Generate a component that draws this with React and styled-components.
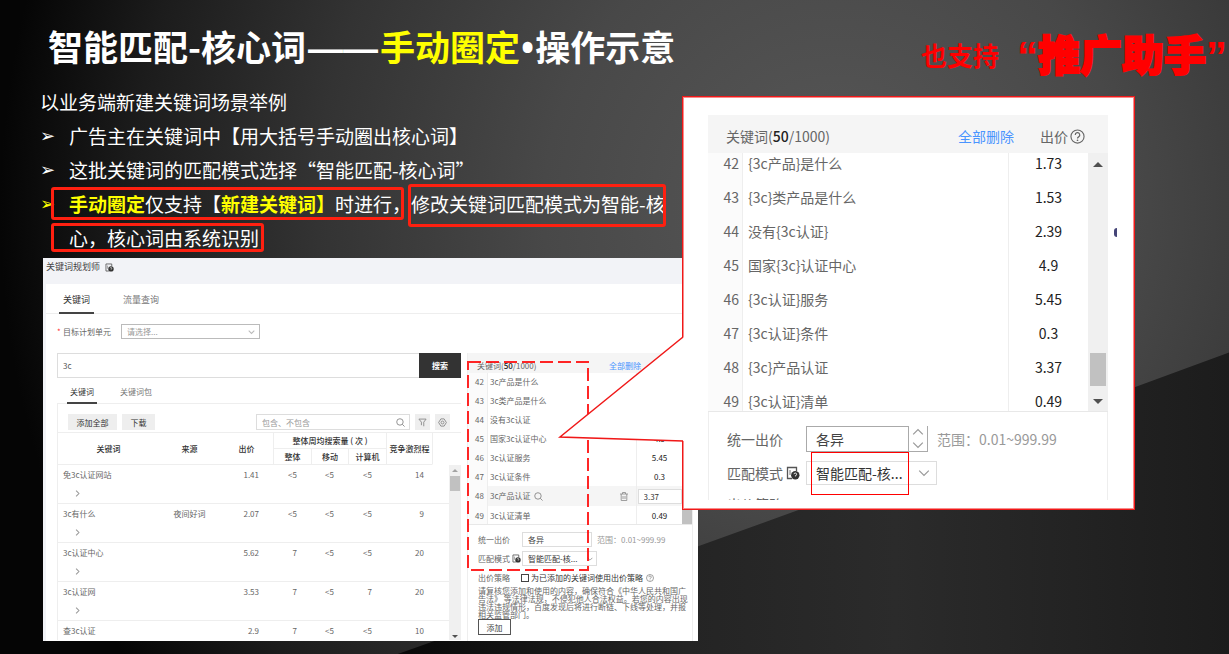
import React from "react";
import styled, { createGlobalStyle, css } from "styled-components";

const Global = createGlobalStyle`
  *, *::before, *::after { box-sizing: border-box; }
  body { margin: 0; background: #000; }
  body, button, input, select { font-family: "Noto Sans CJK SC", sans-serif; }
  ul, h1, p { margin: 0; padding: 0; list-style: none; }
`;

/* ---------- slide ---------- */

const Slide = styled.main`
  position: relative;
  min-height: 100vh;
  overflow: hidden;
  isolation: isolate;
  padding-bottom: 14px;
  background: radial-gradient(ellipse 68% 130% at 68% 32%, #585858 0%, #484848 35%, #333 62%, #1c1c1c 84%, #050505 100%);
`;

const Backdrop = styled.svg`
  position: absolute;
  inset: 0;
  z-index: -1;
  width: 100%;
  height: 100%;
`;

const Header = styled.header`
  display: flex;
  align-items: flex-start;
  justify-content: space-between;
  height: 85px;
  padding: 22px 2px 0 48px;
  white-space: nowrap;
`;

const Title = styled.h1`
  font-size: 35px;
  line-height: 48px;
  font-weight: 700;
  color: #fff;
`;

const TitleAccent = styled.span`
  color: #ff0;
`;

const Dash = styled.span`
  padding: 0 2px;
  font-family: "Liberation Sans", sans-serif;
`;

const Dot = styled.span`
  padding: 0 1px;
  font-family: "Open Sans", sans-serif;
`;

const Note = styled.p`
  display: flex;
  align-items: center;
  gap: 18px;
  margin-top: 11px;
  color: #f00;
  font-size: 26px;
  line-height: 44px;
  font-weight: 700;
`;

const NoteStrong = styled.strong`
  font-size: 42px;
  line-height: 40px;
  font-weight: 900;
  -webkit-text-stroke: 2px #f00;
`;

const Quote = styled.span`
  font-family: "Liberation Sans", sans-serif;
  -webkit-text-stroke: 0;
`;

const Points = styled.ul`
  padding: 0 0 0 40px;
  color: #fff;
  font-size: 19px;
  line-height: 34px;
  white-space: nowrap;
`;

const Point = styled.li`
  display: grid;
  grid-template-columns: ${(p) => (p.$plain ? "1fr" : "29px 1fr")};
`;

const Arrow = styled.span`
  font-family: "DejaVu Sans", sans-serif;
  font-size: 18px;
  color: ${(p) => (p.$accent ? "#ff0" : "#fff")};
`;

const Accent = styled.strong`
  font-weight: 700;
  color: #ff0;
`;

const Ringed = styled.span`
  position: relative;
  &::after {
    content: "";
    position: absolute;
    inset: ${(p) => p.$inset};
    border: 3px solid #ff2010;
    border-radius: 3px;
  }
`;

/* ---------- keyword planner panel ---------- */

const Panel = styled.section`
  width: calc(100% - 574px);
  margin: 3px 0 0 43px;
  padding-left: 3px;
  background: #f2f3f7;
  color: #666;
  font-size: 8px;
  line-height: 12px;
`;

const PanelTitle = styled.div`
  display: flex;
  align-items: center;
  gap: 5px;
  height: 26px;
  padding: 0 0 8px;
  font-size: 9px;
  color: #444;
`;

const PanelBody = styled.div`
  background: #fff;
`;

const Tabs = styled.nav`
  display: flex;
  height: ${(p) => (p.$small ? 26 : 30)}px;
  padding-left: ${(p) => (p.$small ? 10 : 13)}px;
  gap: ${(p) => (p.$small ? 20 : 25)}px;
  border-bottom: 1px solid #eee;
`;

const Tab = styled.button`
  height: ${(p) => (p.$small ? 26 : 30)}px;
  padding: 3px ${(p) => (p.$small ? 3 : 4)}px 0;
  border: 0;
  border-bottom: 2px solid ${(p) => (p.$on ? "#444" : "transparent")};
  background: none;
  font-size: ${(p) => (p.$small ? 8 : 9)}px;
  line-height: 12px;
  color: ${(p) => (p.$on ? "#333" : "#777")};
`;

const TargetRow = styled.div`
  display: flex;
  align-items: center;
  height: 39px;
  padding: 0 0 4px 11px;
`;

const Required = styled.span`
  width: 6px;
  color: #f33;
`;

const Label = styled.label`
  width: ${(p) => p.$w}px;
  display: flex;
  align-items: center;
  gap: ${(p) => p.$gap || 2}px;
  flex: none;
`;

const SelectWrap = styled.span`
  position: relative;
  display: flex;
  flex: none;
  width: ${(p) => p.$w}px;
  height: ${(p) => p.$h}px;
  & > svg {
    position: absolute;
    right: ${(p) => p.$icon}px;
    top: 50%;
    transform: translateY(-50%);
    pointer-events: none;
  }
`;

const Select = styled.select`
  appearance: none;
  width: 100%;
  padding: 0 ${(p) => p.$pad}px;
  border: 1px solid ${(p) => p.$line || "#ddd"};
  border-radius: 0;
  background: #fff;
  color: ${(p) => p.$color || "#333"};
  font-size: inherit;
`;

const Columns = styled.div`
  display: flex;
  align-items: stretch;
  gap: 6px;
  padding: 0 5px 0 11px;
`;

const Left = styled.div`
  flex: 1;
  min-width: 0;
`;

const Search = styled.form`
  display: flex;
  height: 25px;
`;

const SearchInput = styled.input`
  flex: 1;
  min-width: 0;
  padding: 0 5px;
  border: 1px solid #ddd;
  border-right: 0;
  font-size: 8px;
  color: #555;
`;

const SearchButton = styled.button`
  width: 42px;
  padding: 0;
  border: 0;
  background: #333;
  color: #fff;
  font-size: 8px;
  font-weight: 700;
`;

const Box = styled.div`
  border-left: 1px solid #eee;
`;

const Toolbar = styled.div`
  display: flex;
  align-items: center;
  gap: 5px;
  height: 28px;
  padding: 8px 11px 0 10px;
`;

const GrayButton = styled.button`
  display: flex;
  align-items: center;
  justify-content: center;
  width: ${(p) => p.$w}px;
  height: 16px;
  padding: 0;
  border: 0;
  background: #eee;
  color: #333;
  font-size: 8px;
`;

const Filter = styled.label`
  display: flex;
  align-items: center;
  width: 154px;
  height: 16px;
  margin-left: auto;
  padding: 0 4px 0 5px;
  border: 1px solid #ddd;
`;

const FilterInput = styled.input`
  flex: 1;
  min-width: 0;
  padding: 0;
  border: 0;
  outline: 0;
  font-size: 8px;
  &::placeholder { color: #999; }
`;

const TableArea = styled.div`
  display: flex;
  border-top: 1px solid #eee;
`;

const Table = styled.table`
  flex: 1;
  min-width: 0;
  height: 100%;
  table-layout: fixed;
  border-collapse: separate;
  border-spacing: 0;
`;

const Th = styled.th`
  height: ${(p) => (p.$boxed ? 16 : 32)}px;
  padding: 0;
  border-bottom: 1px solid #eee;
  ${(p) => p.$boxed && css`border-left: 1px solid #eee;`}
  color: #333;
  font-weight: 500;
  overflow: hidden;
  white-space: nowrap;
`;

const ThBlank = styled(Th)`
  border-bottom-color: transparent;
`;

const Td = styled.td`
  height: ${(p) => (p.$last ? 19 : 39)}px;
  padding: 4px ${(p) => p.$end || 0}px 0 ${(p) => p.$start || 0}px;
  vertical-align: top;
  text-align: ${(p) => p.$align || "right"};
  white-space: nowrap;
  border-bottom: ${(p) => (p.$last ? 0 : 1)}px solid #eee;
  & > svg { display: block; margin: 9px 0 0 11px; }
`;

const ScrollTrack = styled.div`
  display: flex;
  flex-direction: column;
  align-items: center;
  flex: none;
  width: ${(p) => p.$w}px;
  margin-top: ${(p) => p.$top || 0}px;
  background: #f0f0f0;
`;

const Thumb = styled.i`
  width: 100%;
  height: ${(p) => p.$h}px;
  margin-top: ${(p) => p.$top}px;
  border: solid #f0f0f0;
  border-width: 0 ${(p) => p.$gap}px;
  background: #c1c1c1;
`;

const Caret = styled.i`
  width: 0;
  height: 0;
  border: solid transparent;
  border-width: 0 ${(p) => p.$s}px;
  ${(p) => (p.$down
    ? css`border-top: ${p.$s}px solid #505050; margin-top: auto; margin-bottom: ${p.$m}px;`
    : css`border-bottom: ${p.$s}px solid ${p.$pale ? "#a3a3a3" : "#505050"}; margin-top: ${p.$m}px;`)}
`;

/* ---------- selected keywords ---------- */

const Picked = styled.div`
  position: relative;
  width: 226px;
  flex: none;
  border: solid #eee;
  border-width: 0 1px;
`;

const PickedHead = styled.div`
  display: flex;
  align-items: center;
  height: ${(p) => (p.$big ? 38 : 20)}px;
  padding: ${(p) => (p.$big ? "4px 23px 0 18px" : "6px 51px 0 9px")};
  background: #f5f5f5;
  & b { color: #222; font-weight: 500; }
`;

const ClearLink = styled.a`
  margin-left: auto;
  color: #4a94ff;
  text-decoration: none;
`;

const PriceHead = styled.span`
  display: flex;
  align-items: center;
  gap: 2px;
  margin-left: 26px;
`;

const ListArea = styled.div`
  display: flex;
  height: ${(p) => p.$h}px;
  overflow: hidden;
  border-bottom: 1px solid #e8e8e8;
`;

const List = styled.ul`
  display: flex;
  flex: 1;
  min-width: 0;
  flex-direction: column;
  justify-content: center;
`;

const Row = styled.li`
  display: grid;
  flex: none;
  height: ${(p) => (p.$big ? 34 : p.$hover ? 20 : 19)}px;
  line-height: ${(p) => (p.$big ? 34 : p.$hover ? 20 : 19)}px;
  grid-template-columns: ${(p) => (p.$big ? "35px 1fr 80px" : "20px 1fr 46px")};
  background: ${(p) => (p.$hover ? "#f5f5f5" : "#fff")};
`;

const Index = styled.span`
  padding-right: 3px;
  text-align: right;
  border-right: 1px solid #eee;
  background: #fbfbfb;
`;

const Name = styled.span`
  display: flex;
  align-items: center;
  gap: 3px;
  padding: 0 8px 0 ${(p) => (p.$big ? 5 : 2)}px;
  & > svg:last-child:not(:first-child) { margin-left: auto; }
`;

const Price = styled.span`
  display: flex;
  align-items: center;
  justify-content: center;
  color: #222;
  border-left: 1px solid #eee;
`;

const PriceInput = styled.input`
  width: 44px;
  height: 15px;
  padding: 0 5px;
  border: 1px solid #ddd;
  font-size: 8px;
  color: #333;
`;

const Form = styled.form`
  padding: 5px 0 6px 10px;
  white-space: nowrap;
`;

const FormRow = styled.div`
  display: flex;
  align-items: center;
  height: 19px;
`;

const Amount = styled.input`
  width: ${(p) => p.$w}px;
  height: ${(p) => p.$h}px;
  flex: none;
  padding: 0 ${(p) => p.$pad}px;
  border: 1px solid ${(p) => p.$line || "#ddd"};
  font-size: inherit;
  color: #444;
`;

const Range = styled.span`
  margin-left: ${(p) => p.$gap}px;
  color: #999;
`;

const Check = styled.input`
  appearance: none;
  width: 8px;
  height: 8px;
  margin: 0 2px 0 0;
  border: 1px solid #444;
  background: #fff;
`;

const CheckLabel = styled.label`
  display: flex;
  align-items: center;
  margin-right: 3px;
  color: #333;
`;

const Legal = styled.p`
  width: 212px;
  line-height: 8px;
  white-space: normal;
`;

const AddButton = styled.button`
  display: block;
  width: 33px;
  height: 16px;
  padding: 0;
  border: 1px solid #555;
  background: #fff;
  color: #444;
  font-size: 8px;
`;

const DashFrame = styled.svg`
  position: absolute;
  left: -1px;
  top: 8px;
  width: 122px;
  height: 211px;
  pointer-events: none;
`;

/* ---------- enlarged call-out ---------- */

const Callout = styled.aside`
  position: absolute;
  top: 96px;
  right: 94px;
  width: 453px;
  padding: 18px 26px 9px 25px;
  border: 1px solid #f01818;
  outline: 1px solid #f0181880;
  outline-offset: -2px;
  background: #fff;
  color: #666;
  font-size: 14px;
  line-height: 20px;
`;

const Tail = styled.svg`
  position: absolute;
  left: -126px;
  top: 238px;
  width: 128px;
  height: 110px;
`;

const Details = styled.div`
  height: 88px;
  overflow: hidden;
  border: solid #eee;
  border-width: 0 1px;
  padding: 10px 0 0 18px;
  white-space: nowrap;
`;

const DetailRow = styled.div`
  display: flex;
  align-items: center;
  height: ${(p) => (p.$tight ? 28 : 34)}px;
`;

const Spinner = styled.span`
  display: flex;
  flex-direction: column;
  align-items: center;
  justify-content: space-around;
  width: 19px;
  height: 26px;
  border: solid #aaa;
  border-width: 0 1px 1px 0;
`;

const Marked = styled.span`
  position: absolute;
  inset: -9px 28px -10px 5px;
  border: 1px solid #f00;
  pointer-events: none;
`;

const Speck = styled.i`
  position: absolute;
  right: 17px;
  top: 131px;
  width: 3px;
  height: 9px;
  border-radius: 3px 0 0 3px;
  background: #447;
`;

/* ---------- icons ---------- */

const stroke = { fill: "none", stroke: "#888" };

const Chevron = ({ w = 6, dir = "down", color = "#999" }) => {
  const d = { down: "M1 3l4 4 4-4", up: "M1 7l4-4 4 4", right: "M3 1l4 4-4 4" }[dir];
  return (
    <svg width={w} height={w} viewBox="0 0 10 10">
      <path d={d} {...stroke} stroke={color} strokeWidth={w > 8 ? 1 : 1.5} />
    </svg>
  );
};

const Help = ({ s }) => (
  <svg width={s} height={s} viewBox="0 0 16 16">
    <circle cx="8" cy="8" r="7" {...stroke} stroke="#666" strokeWidth="1.2" />
    <path d="M5.6 6.4a2.4 2.4 0 1 1 3.6 2c-.8.5-1.2.8-1.2 1.7" {...stroke} stroke="#666" strokeWidth="1.3" />
    <circle cx="8" cy="12" r="0.9" fill="#666" />
  </svg>
);

const DocHelp = ({ s }) => (
  <svg width={s} height={s} viewBox="0 0 14 14">
    <path d="M6 12.5H1.5v-11h9V5" {...stroke} stroke="#555" strokeWidth="1.3" />
    <path d="M4 4v5" {...stroke} stroke="#777" />
    <circle cx="9.3" cy="9.2" r="4.2" fill="#333" />
    <path d="M8 8.2a1.3 1.3 0 1 1 1.4 1.4v.8" {...stroke} stroke="#fff" strokeWidth="0.9" />
  </svg>
);

const Magnifier = ({ s = 9 }) => (
  <svg width={s} height={s} viewBox="0 0 10 10">
    <circle cx="4.4" cy="4.4" r="3.6" {...stroke} />
    <path d="M7 7l2.5 2.5" {...stroke} />
  </svg>
);

const Funnel = () => (
  <svg width="9" height="9" viewBox="0 0 10 10">
    <path d="M1 1.2h8L6.4 4.6v4.6M3.8 8V4.6L1 1.2" {...stroke} />
  </svg>
);

const Gear = () => (
  <svg width="9" height="9" viewBox="0 0 10 10">
    <path d="M3.2 1h3.6L9.3 5 6.8 9H3.2L.7 5z" {...stroke} />
    <circle cx="5" cy="5" r="1.6" {...stroke} />
  </svg>
);

const Trash = () => (
  <svg width="8" height="9" viewBox="0 0 8 9">
    <path d="M0 2h8M2.5 2V.5h3V2M1.2 2v6.5h5.6V2M3 4v3M5 4v3" {...stroke} strokeWidth="0.8" />
  </svg>
);

/* ---------- data ---------- */

const results = [
  ["免3c认证网站", "", "1.41", "<5", "<5", "<5", "14"],
  ["3c有什么", "夜间好词", "2.07", "<5", "<5", "<5", "9"],
  ["3c认证中心", "", "5.62", "7", "<5", "<5", "20"],
  ["3c认证网", "", "3.53", "7", "<5", "7", "20"],
  ["查3c认证", "", "2.9", "7", "<5", "<5", "10"],
];

const picked = [
  ["42", "3c产品是什么", "{3c产品}是什么", "1.73"],
  ["43", "3c类产品是什么", "{3c}类产品是什么", "1.53"],
  ["44", "没有3c认证", "没有{3c认证}", "2.39"],
  ["45", "国家3c认证中心", "国家{3c}认证中心", "4.9"],
  ["46", "3c认证服务", "{3c认证}服务", "5.45"],
  ["47", "3c认证条件", "{3c认证}条件", "0.3"],
  ["48", "3c产品认证", "{3c}产品认证", "3.37"],
  ["49", "3c认证清单", "{3c认证}清单", "0.49"],
];

const columnWidths = [101, 61, 53, 38, 37, 38, 46, null];

function ResultTable() {
  return (
    <TableArea>
      <Table>
        <colgroup>
          {columnWidths.map((w, i) => (
            <col key={i} width={w || undefined} />
          ))}
        </colgroup>
        <thead>
          <tr>
            <Th rowSpan={2}>关键词</Th>
            <Th rowSpan={2}>来源</Th>
            <Th rowSpan={2}>出价</Th>
            <Th colSpan={3} $boxed>整体周均搜索量 ( 次 )</Th>
            <Th rowSpan={2} $boxed>竞争激烈程</Th>
            <ThBlank rowSpan={2} $boxed />
          </tr>
          <tr>
            <Th $boxed>整体</Th>
            <Th $boxed>移动</Th>
            <Th $boxed>计算机</Th>
          </tr>
        </thead>
        <tbody>
          {results.map((r, i) => {
            const last = i === results.length - 1;
            return (
              <tr key={r[0]}>
                <Td $align="left" $start={5} $last={last}>
                  {r[0]}
                  {!last && <Chevron dir="right" w={7} />}
                </Td>
                <Td $align="center" $last={last}>{r[1]}</Td>
                {r.slice(2, 6).map((v, n) => (
                  <Td key={n} $end={14} $last={last}>{v}</Td>
                ))}
                <Td $end={8} $last={last}>{r[6]}</Td>
                <Td $last={last} />
              </tr>
            );
          })}
        </tbody>
      </Table>
      <ScrollTrack $w={12} $top={32}>
        <Caret $s={3} $m={4} $pale />
        <Thumb $h={15} $top={4} $gap={1} />
        <Caret $s={3} $m={2} $down />
      </ScrollTrack>
    </TableArea>
  );
}

function PickedPanel() {
  return (
    <Picked>
      <PickedHead>
        <span>关键词(<b>50</b>/1000)</span>
        <ClearLink href="#clear">全部删除</ClearLink>
      </PickedHead>
      <ListArea $h={152}>
        <List>
          {picked.map(([no, word, , price]) => {
            const active = no === "48";
            return (
              <Row key={no} $hover={active}>
                <Index>{no}</Index>
                <Name>
                  <span>{word}</span>
                  {active && <Magnifier />}
                  {active && <Trash />}
                </Name>
                <Price>
                  {active ? <PriceInput defaultValue={price} aria-label="出价" /> : price}
                </Price>
              </Row>
            );
          })}
        </List>
        <ScrollTrack $w={10}>
          <Thumb $h={33} $top={118} $gap={0} />
        </ScrollTrack>
      </ListArea>
      <Form onSubmit={(e) => e.preventDefault()}>
        <FormRow>
          <Label htmlFor="bid" $w={44}>统一出价</Label>
          <Amount id="bid" defaultValue="各异" $w={70} $h={15} $pad={5} />
          <Range $gap={5}>范围：0.01~999.99</Range>
        </FormRow>
        <FormRow>
          <Label htmlFor="mode" $w={44}>匹配模式<DocHelp s={9} /></Label>
          <SelectWrap $w={75} $h={15} $icon={4}>
            <Select id="mode" $pad={5}><option>智能匹配-核...</option></Select>
            <Chevron />
          </SelectWrap>
        </FormRow>
        <FormRow>
          <Label as="span" $w={43}>出价策略</Label>
          <CheckLabel><Check type="checkbox" />为已添加的关键词使用出价策略</CheckLabel>
          <Help s={8} />
        </FormRow>
        <Legal>
          请复核您添加和使用的内容，确保符合《中华人民共和国广告法》 等法律法规，不侵犯他人合法权益。若您的内容出现违法违规情形，百度发现后将进行断链、下线等处理，并报相关监管部门。
        </Legal>
        <AddButton>添加</AddButton>
      </Form>
      <DashFrame>
        <rect x="1" y="1" width="120" height="208" fill="none" stroke="#f00" strokeOpacity="0.85" strokeWidth="2" strokeDasharray="13 5" />
      </DashFrame>
    </Picked>
  );
}

function PlannerPanel() {
  return (
    <Panel>
      <PanelTitle>关键词规划师 <DocHelp s={9} /></PanelTitle>
      <PanelBody>
        <Tabs>
          <Tab $on>关键词</Tab>
          <Tab>流量查询</Tab>
        </Tabs>
        <TargetRow>
          <Required>*</Required>
          <Label htmlFor="unit" $w={58}>目标计划单元</Label>
          <SelectWrap $w={139} $h={15} $icon={5}>
            <Select id="unit" $pad={5} $line="#bbb" $color="#999"><option>请选择...</option></Select>
            <Chevron w={7} color="#bbb" />
          </SelectWrap>
        </TargetRow>
        <Columns>
          <Left>
            <Search onSubmit={(e) => e.preventDefault()}>
              <SearchInput defaultValue="3c" aria-label="搜索关键词" />
              <SearchButton>搜索</SearchButton>
            </Search>
            <Tabs $small>
              <Tab $small $on>关键词</Tab>
              <Tab $small>关键词包</Tab>
            </Tabs>
            <Box>
              <Toolbar>
                <GrayButton $w={49}>添加全部</GrayButton>
                <GrayButton $w={33}>下载</GrayButton>
                <Filter>
                  <FilterInput placeholder="包含、不包含" aria-label="包含、不包含" />
                  <Magnifier />
                </Filter>
                <GrayButton $w={15} aria-label="筛选"><Funnel /></GrayButton>
                <GrayButton $w={15} aria-label="设置"><Gear /></GrayButton>
              </Toolbar>
              <ResultTable />
            </Box>
          </Left>
          <PickedPanel />
        </Columns>
      </PanelBody>
    </Panel>
  );
}

function CalloutPanel() {
  return (
    <Callout>
      <Tail viewBox="0 0 128 110">
        <path d="M128 1L3 102l125 4z" fill="#fff" />
        <path d="M126 2L3 102l123 4" fill="none" stroke="#f01818" strokeWidth="1.5" />
      </Tail>
      <PickedHead $big>
        <span>关键词(<b>50</b>/1000)</span>
        <ClearLink href="#clear-all">全部删除</ClearLink>
        <PriceHead>出价<Help s={15} /></PriceHead>
      </PickedHead>
      <ListArea $h={259}>
        <List>
          {picked.map(([no, , word, price]) => (
            <Row key={no} $big>
              <Index $big>{no}</Index>
              <Name $big>{word}</Name>
              <Price>{price}</Price>
            </Row>
          ))}
        </List>
        <ScrollTrack $w={20}>
          <Caret $s={5} $m={9} />
          <Thumb $h={33} $top={186} $gap={2} />
          <Caret $s={5} $m={7} $down />
        </ScrollTrack>
      </ListArea>
      <Details>
        <DetailRow>
          <Label htmlFor="bid-large" $w={79}>统一出价</Label>
          <Amount id="bid-large" defaultValue="各异" $w={103} $h={26} $pad={9} $line="#aaa" />
          <Spinner><Chevron dir="up" w={12} /><Chevron w={12} /></Spinner>
          <Range $gap={9}>范围：0.01~999.99</Range>
        </DetailRow>
        <DetailRow>
          <Label htmlFor="mode-large" $w={79} $gap={3}>匹配模式<DocHelp s={14} /></Label>
          <SelectWrap $w={131} $h={24} $icon={7}>
            <Select id="mode-large" $pad={9}><option>智能匹配-核...</option></Select>
            <Chevron w={12} />
            <Marked />
          </SelectWrap>
        </DetailRow>
        <DetailRow $tight>出价策略</DetailRow>
      </Details>
      <Speck />
    </Callout>
  );
}

export default function App() {
  return (
    <Slide lang="zh-CN">
      <Global />
      <Backdrop viewBox="0 0 1229 654" preserveAspectRatio="none">
        <defs>
          <linearGradient id="floor" x1="0" x2="1">
            <stop offset="0" stopColor="#080808" />
            <stop offset="0.35" stopColor="#242424" />
            <stop offset="0.6" stopColor="#2b2b2b" />
            <stop offset="1" stopColor="#1c1c1c" />
          </linearGradient>
        </defs>
        <path d="M395 654Q800 510 1229 352V654z" fill="url(#floor)" />
      </Backdrop>
      <Header>
        <Title>
          智能匹配-核心词<Dash>——</Dash><TitleAccent>手动圈定</TitleAccent><Dot>•</Dot>操作示意
        </Title>
        <Note>
          也支持
          <NoteStrong><Quote>“</Quote>推广助手<Quote>”</Quote></NoteStrong>
        </Note>
      </Header>
      <Points>
        <Point $plain>以业务端新建关键词场景举例</Point>
        <Point><Arrow>➢</Arrow><span>广告主在关键词中【用大括号手动圈出核心词】</span></Point>
        <Point><Arrow>➢</Arrow><span>这批关键词的匹配模式选择“智能匹配-核心词”</span></Point>
        <Point>
          <Arrow $accent>➢</Arrow>
          <span>
            <Ringed $inset="-3px 7px -3px -18px">
              <Accent>手动圈定</Accent>仅支持【<Accent>新建关键词】</Accent>时进行，
            </Ringed>
            <Ringed $inset="-6px -1px -10px -3px">修改关键词匹配模式为智能-核</Ringed>
            <br />
            <Ringed $inset="-1px -5px -1px -18px">心，核心词由系统识别</Ringed>
          </span>
        </Point>
      </Points>
      <PlannerPanel />
      <CalloutPanel />
    </Slide>
  );
}
